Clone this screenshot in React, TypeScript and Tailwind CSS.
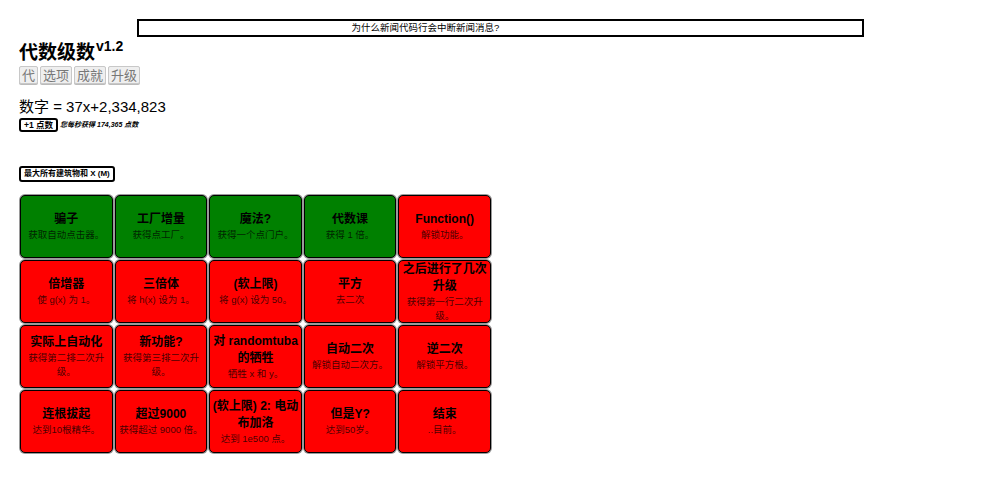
import React from "react";

interface Upgrade {
  title: string;
  desc: string;
  bought: boolean;
}

const upgrades: Upgrade[] = [
  { title: "骗子", desc: "获取自动点击器。", bought: true },
  { title: "工厂增量", desc: "获得点工厂。", bought: true },
  { title: "魔法?", desc: "获得一个点门户。", bought: true },
  { title: "代数课", desc: "获得 1 倍。", bought: true },
  { title: "Function()", desc: "解锁功能。", bought: false },
  { title: "倍增器", desc: "使 g(x) 为 1。", bought: false },
  { title: "三倍体", desc: "将 h(x) 设为 1。", bought: false },
  { title: "(软上限)", desc: "将 g(x) 设为 50。", bought: false },
  { title: "平方", desc: "去二次", bought: false },
  { title: "之后进行了几次升级", desc: "获得第一行二次升级。", bought: false },
  { title: "实际上自动化", desc: "获得第二排二次升级。", bought: false },
  { title: "新功能?", desc: "获得第三排二次升级。", bought: false },
  { title: "对 randomtuba 的牺牲", desc: "牺牲 x 和 y。", bought: false },
  { title: "自动二次", desc: "解锁自动二次方。", bought: false },
  { title: "逆二次", desc: "解锁平方根。", bought: false },
  { title: "连根拔起", desc: "达到10根精华。", bought: false },
  { title: "超过9000", desc: "获得超过 9000 倍。", bought: false },
  { title: "(软上限) 2: 电动布加洛", desc: "达到 1e500 点。", bought: false },
  { title: "但是Y?", desc: "达到50岁。", bought: false },
  { title: "结束", desc: "..目前。", bought: false },
];

const font = "font-['Liberation_Sans','Noto_Sans_CJK_SC',sans-serif]";

export default function App() {
  return (
    <div className={`w-[1000px] h-[501px] bg-white text-black ${font}`}>
      <div className="pt-[19px]">
        {/* news ticker, text scrolled part way */}
        <div className="mx-auto w-[727px] h-[18px] border-2 border-black flex items-center pl-[213px] text-[9.5px] leading-none">
          为什么新闻代码行会中断新闻消息?
        </div>
      </div>

      <div className="pl-[19px]">
        <h1 className="mt-[5px] text-[19px] leading-[22px] font-bold">
          代数级数<sup className="text-[14px] align-top relative top-[4px] ml-[1px]">v1.2</sup>
        </h1>

        <div className="mt-[2px] flex gap-[2px]">
          {["代", "选项", "成就", "升级"].map((t) => (
            <button
              key={t}
              className="h-[18px] px-[2px] bg-[#efefef] border border-[#c8c8c8] rounded-[2px] text-[13px] leading-none text-[#777] shadow-[0_1px_0_#bbb]"
            >
              {t}
            </button>
          ))}
        </div>

        <div className="mt-[14px] text-[15px] leading-[18px]">数字 = 37x+2,334,823</div>

        <div className="mt-[2px] flex items-center gap-[2px]">
          <button className="h-[14px] px-[3px] border-2 border-black rounded-[3px] text-[8.5px] font-bold leading-none">
            +1 点数
          </button>
          <span className="text-[7px] font-bold italic">您每秒获得 174,365 点数</span>
        </div>

        <button className="mt-[34px] h-[16px] px-[3px] border-2 border-black rounded-[3px] text-[8px] font-bold leading-none">
          最大所有建筑物和 X (M)
        </button>

        <div className="mt-[12px] ml-[1px] w-[471px] grid grid-cols-5 gap-[2px]">
          {upgrades.map((u) => (
            <div
              key={u.title}
              className={`h-[63px] border-[1.5px] border-black rounded-[5px] shadow-[0_0_0_1px_#9a9a9a] flex flex-col items-center justify-center text-center px-[1px] ${
                u.bought ? "bg-[#008000]" : "bg-[#ff0000]"
              }`}
            >
              <div className="text-[12px] leading-[17px] font-bold">{u.title}</div>
              <div className="text-[9.5px] leading-[14px] text-black/75 px-[2px]">{u.desc}</div>
            </div>
          ))}
        </div>
      </div>
    </div>
  );
}
